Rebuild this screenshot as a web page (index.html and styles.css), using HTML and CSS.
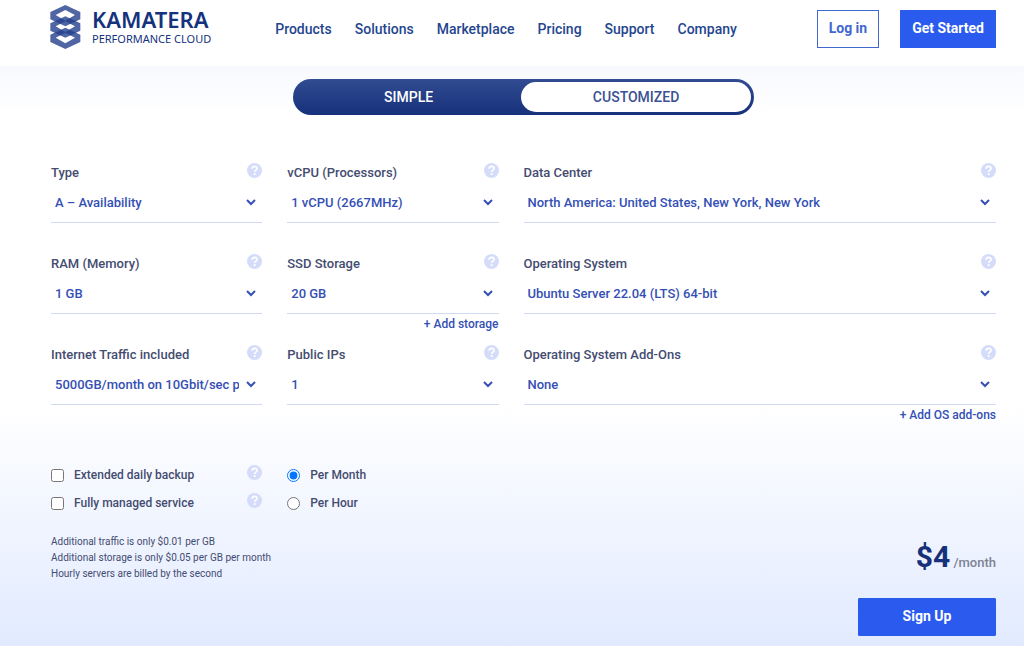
FILE: index.html
```
<!DOCTYPE html>
<html lang="en">
<head>
<meta charset="utf-8">
<meta name="viewport" content="width=device-width, initial-scale=1">
<title>Kamatera Performance Cloud</title>
<link rel="stylesheet" href="styles.css">
</head>
<body>
<svg class="sprite" aria-hidden="true">
  <symbol id="help" viewBox="0 0 15 15">
    <circle cx="7.5" cy="7.5" r="7.5" fill="#d4dcfa"/>
    <path d="M5.1 5.7C5.2 4.2 6.2 3.4 7.6 3.4C9 3.4 10 4.2 10 5.5C10 7.2 7.7 7.2 7.7 9" fill="none" stroke="#fff" stroke-width="1.7"/>
    <circle cx="7.7" cy="11.1" r="1.1" fill="#fff"/>
  </symbol>
</svg>
<header class="header">
  <a class="logo" href="#" aria-label="Kamatera Performance Cloud">
    <svg class="logo-mark" viewBox="0 0 93 132" aria-hidden="true">
      <g fill="#243f8c" fill-opacity=".8" fill-rule="evenodd">
        <path d="M46 0L91 21V43L46 64L1 43V21ZM46 15L17 30L46 47L75 30Z"/>
        <path d="M46 34L91 55V77L46 98L1 77V55ZM46 49L17 64L46 81L75 64Z"/>
        <path d="M46 68L91 89V111L46 132L1 111V89ZM46 83L17 98L46 115L75 98Z"/>
      </g>
    </svg>
    <span class="logo-text">
      <span class="logo-name">KAMATERA</span>
      <span class="logo-tag">PERFORMANCE CLOUD</span>
    </span>
  </a>
  <nav class="nav">
    <a href="#">Products</a>
    <a href="#">Solutions</a>
    <a href="#">Marketplace</a>
    <a href="#">Pricing</a>
    <a href="#">Support</a>
    <a href="#">Company</a>
  </nav>
  <div class="actions">
    <a class="btn btn-outline" href="#">Log in</a>
    <a class="btn btn-solid" href="#">Get Started</a>
  </div>
</header>
<main class="main">
  <div class="toggle">
    <button class="toggle-item" type="button" aria-pressed="true">SIMPLE</button>
    <button class="toggle-item toggle-light" type="button" aria-pressed="false">CUSTOMIZED</button>
  </div>
  <form class="config">
    <div class="fields">
      <div class="field">
        <div class="field-head"><label for="type">Type</label><svg class="help"><use href="#help"/></svg></div>
        <div class="control"><select id="type"><option>A – Availability</option></select></div>
      </div>
      <div class="field">
        <div class="field-head"><label for="cpu">vCPU (Processors)</label><svg class="help"><use href="#help"/></svg></div>
        <div class="control"><select id="cpu"><option>1 vCPU (2667MHz)</option></select></div>
      </div>
      <div class="field">
        <div class="field-head"><label for="dc">Data Center</label><svg class="help"><use href="#help"/></svg></div>
        <div class="control"><select id="dc"><option>North America: United States, New York, New York</option></select></div>
      </div>
      <div class="field">
        <div class="field-head"><label for="ram">RAM (Memory)</label><svg class="help"><use href="#help"/></svg></div>
        <div class="control"><select id="ram"><option>1 GB</option></select></div>
      </div>
      <div class="field">
        <div class="field-head"><label for="ssd">SSD Storage</label><svg class="help"><use href="#help"/></svg></div>
        <div class="control"><select id="ssd"><option>20 GB</option></select></div>
        <a class="add" href="#">+ Add storage</a>
      </div>
      <div class="field">
        <div class="field-head"><label for="os">Operating System</label><svg class="help"><use href="#help"/></svg></div>
        <div class="control"><select id="os"><option>Ubuntu Server 22.04 (LTS) 64-bit</option></select></div>
      </div>
      <div class="field">
        <div class="field-head"><label for="traffic">Internet Traffic included</label><svg class="help"><use href="#help"/></svg></div>
        <div class="control"><select id="traffic"><option>5000GB/month on 10Gbit/sec port</option></select></div>
      </div>
      <div class="field">
        <div class="field-head"><label for="ips">Public IPs</label><svg class="help"><use href="#help"/></svg></div>
        <div class="control"><select id="ips"><option>1</option></select></div>
      </div>
      <div class="field">
        <div class="field-head"><label for="addons">Operating System Add-Ons</label><svg class="help"><use href="#help"/></svg></div>
        <div class="control"><select id="addons"><option>None</option></select></div>
        <a class="add" href="#">+ Add OS add-ons</a>
      </div>
    </div>
    <div class="options">
      <div class="option-list">
        <div class="option"><label><input type="checkbox">Extended daily backup</label><svg class="help"><use href="#help"/></svg></div>
        <div class="option"><label><input type="checkbox">Fully managed service</label><svg class="help"><use href="#help"/></svg></div>
      </div>
      <div class="option-list">
        <div class="option"><label><input type="radio" name="billing" checked>Per Month</label></div>
        <div class="option"><label><input type="radio" name="billing">Per Hour</label></div>
      </div>
    </div>
    <div class="summary">
      <p class="notes">Additional traffic is only $0.01 per GB<br>Additional storage is only $0.05 per GB per month<br>Hourly servers are billed by the second</p>
      <div class="order">
        <div class="price"><strong>$4</strong> /month</div>
        <button class="btn btn-solid signup" type="submit">Sign Up</button>
      </div>
    </div>
  </form>
</main>
</body>
</html>
```
FILE: styles.css
```
* { box-sizing: border-box; }
body {
  margin: 0;
  min-height: 100vh;
  display: flex;
  flex-direction: column;
  background: #fff;
  color: #444c70;
  font-family: Roboto, "Liberation Sans", sans-serif;
  font-weight: 500;
}
a { text-decoration: none; }
.sprite { display: none; }
.header {
  display: flex;
  align-items: flex-start;
  padding: 5px 28px 17px 50px;
}
.logo { display: flex; gap: 11px; color: #15327c; }
.logo-mark { width: 31px; height: 44px; }
.logo-text { display: flex; flex-direction: column; padding-top: 2px; font-family: "Noto Sans", sans-serif; }
.logo-name { font-size: 22px; line-height: 25px; font-weight: 600; }
.logo-tag { font-size: 11px; line-height: 14px; font-weight: 400; }
.nav { display: flex; gap: 23px; margin-left: 64px; padding-top: 14px; }
.nav a { color: #25468f; font-size: 14px; line-height: 20px; }
.actions { display: flex; gap: 21px; margin-left: auto; padding-top: 5px; }
.btn {
  display: block;
  padding: 0 11px 2px;
  border: 1px solid #2a5bea;
  font: 700 14px/34px Roboto, "Liberation Sans", sans-serif;
  text-align: center;
}
.btn-outline { color: #4268cf; border-color: #4268cf; }
.btn-solid { background: #2a5bee; color: #fff; }
.main {
  flex: 1;
  padding: 13px 28px 10px 51px;
  background: linear-gradient(#f7f9fe 0, #fff 50px, #fff 340px, #e1eaff 100%);
}
.toggle {
  display: grid;
  grid-template-columns: 49fr 50fr;
  width: 461px;
  max-width: 100%;
  margin: 0 auto;
  padding: 3px;
  border-radius: 18px;
  background: linear-gradient(#314c91, #16317b);
}
.toggle-item {
  border: 0;
  border-radius: 15px;
  background: none;
  color: #fff;
  font: 500 14px/30px Roboto, "Liberation Sans", sans-serif;
  padding: 0;
}
.toggle-light { background: #fff; color: #3c5191; }
.fields { display: grid; grid-template-columns: 1fr 1fr 2fr; grid-auto-rows: 91px; margin-top: 48px; }
.field { padding-right: 25px; }
.field:nth-child(3n) { padding-right: 0; }
.field-head { display: flex; justify-content: space-between; font-size: 13px; line-height: 20px; }
.help { width: 15px; height: 15px; flex: none; }
.control { padding-right: 3px; border-bottom: 1px solid #cfdaf3; }
.control select {
  display: block;
  width: 100%;
  height: 39px;
  padding: 0 4px 0 0;
  border: 0;
  background: transparent;
  color: #3450b4;
  font: 500 13px/20px Roboto, "Liberation Sans", sans-serif;
}
.add { display: block; text-align: right; font-size: 12px; line-height: 20px; color: #3450b4; }
.options { display: grid; grid-template-columns: 1fr 1fr 2fr; margin-top: 29px; }
.option-list { display: grid; gap: 8px; padding-right: 25px; }
.option { display: flex; justify-content: space-between; font-size: 12px; line-height: 20px; }
.option label { display: flex; align-items: center; gap: 10px; }
.option input { width: 13px; height: 13px; margin: 0; }
.summary { display: flex; justify-content: space-between; margin-top: 21px; }
.notes { margin: 0; font-size: 10px; line-height: 16px; font-weight: 400; }
.order { display: flex; flex-direction: column; align-items: flex-end; gap: 15px; padding-top: 3px; }
.price { font-size: 13px; line-height: 40px; color: #7d8394; }
.price strong { font-size: 30px; font-weight: 700; color: #17307a; }
.signup { width: 138px; border-radius: 1px; }
```
